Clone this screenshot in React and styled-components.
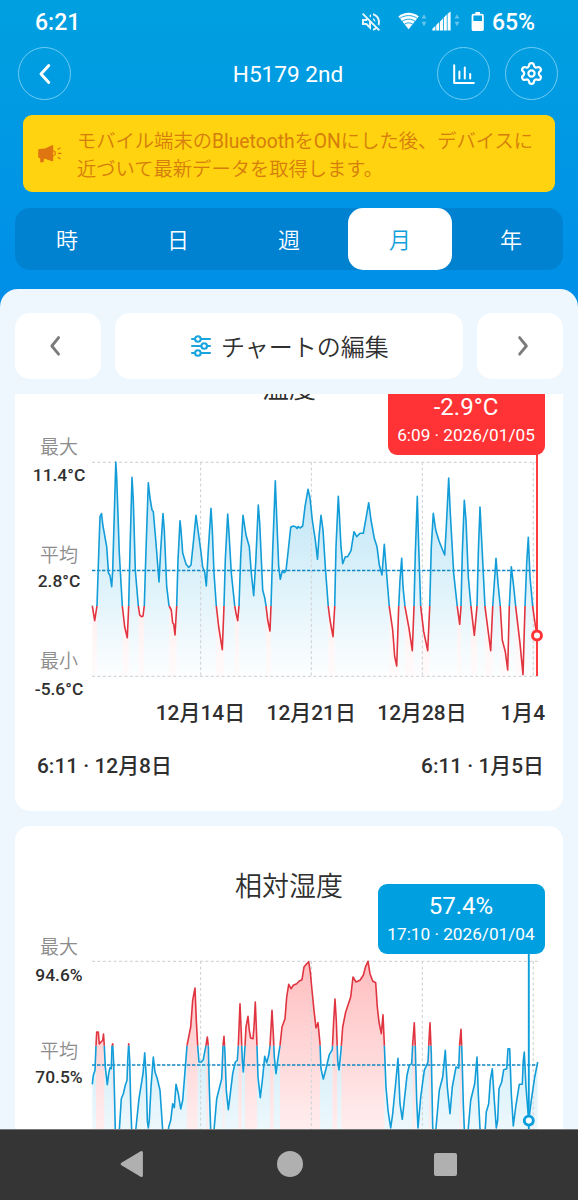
import React from 'react';
import styled, { createGlobalStyle } from 'styled-components';
import { MdOutlineVolumeOff } from 'react-icons/md';
import { Settings } from 'lucide-react';

const PLOT_WIDTH = 446;
const PLOT_HEIGHT = 214;

// x / y pairs in plot pixels, y counted down from the maximum
const temperature = [
  0.3,143.7, 2.7,158.7, 5,143.7, 6.5,98, 8,54.7, 9.5,51.5, 10.8,63, 14.7,84.7, 16.5,111, 18,113.5, 19.7,124.7,
  20.7,108, 23.8,0, 24.7,15, 27.3,91, 30.3,143.7, 32.7,165, 35.3,175.7, 36.7,143.7, 38,88, 40,15.3, 41.3,38,
  43.3,108, 46.3,143.7, 47.7,153, 49.5,154.7, 51,154, 52.3,143.7, 54,88, 56.3,20.7, 58,36, 60,48, 61.3,49.5,
  64,81, 67,120, 68.7,88, 71,51.5, 72.3,68, 74.7,124.7, 77,143.7, 79.3,148, 80.7,161, 81.7,162, 83,173,
  84.7,143.7, 86,98, 88,58.7, 89,68, 90.7,91, 94,102, 96.7,105.5, 99,103, 101.3,81, 104,53.3, 106,68,
  108.7,88, 110.7,105, 112.7,110, 114.3,124, 116.3,88, 119,46.3, 120.3,68, 122,111, 124.3,143.7, 126.7,165,
  130.3,187.7, 132,143.7, 133.3,98, 135.7,52, 137,71, 139.3,111, 142.7,143.7, 144,151, 145.7,158.7, 147,143.7,
  148.7,95, 151,53.3, 154,73, 157.3,84.7, 159.3,111, 161.7,133.7, 163.7,101, 166.3,43, 167.7,61, 170.7,128,
  172.7,135.7, 174,143.7, 175.7,158, 178,169, 179,143.7, 180.7,88, 183.3,18.7, 184.7,54.7, 186.7,104.7,
  188.3,117.3, 190.3,108.7, 192.3,110.7, 194,108.7, 196.3,88, 198.7,65.3, 201.3,64, 204,65, 205,66.5, 206.3,64.5,
  208,66, 210.7,64, 213,44.7, 216,27.3, 218,36, 220.3,58, 223.3,78, 225.5,97.3, 227,74.7, 229,53.3, 231,68,
  233.3,104.7, 236.3,144.7, 238,158, 241,174.7, 242.7,144.7, 244,84.7, 246.3,34.3, 247.3,51.3, 249,84.7,
  250.7,101.7, 253.3,94.7, 255.7,94.7, 259,88.7, 262,69.7, 264.7,74.7, 268,71.3, 271.3,71.3, 274,56.3,
  276.7,40.7, 279,58, 282.3,76.3, 285,84.7, 287.3,103, 290,113, 292.3,82.3, 294.3,108, 297.3,144.7, 300.7,168,
  302.7,194.7, 304.7,204, 306.7,144.7, 308,118, 309.7,96.3, 311,124.7, 313,144.7, 317,166.3, 320.3,188.7,
  322,144.7, 323.3,91.3, 325.3,34.3, 326.7,84.7, 328.7,144.7, 331.7,169.7, 335.7,188.7, 337.7,144.7,
  339.3,84.7, 341.3,51.3, 343.7,68, 347.3,79.7, 352.7,93, 354.3,64.7, 356.7,16, 358.3,51.3, 361.7,111.3,
  365.3,144.7, 367.7,162.3, 369,144.7, 370.3,91.3, 372.3,38.3, 374,58, 376.3,114.7, 379,144.7, 382.3,173.3,
  385,144.7, 386.3,91.3, 388,45, 390,84.7, 393,144.7, 396,168, 398.7,188.7, 400.7,144.7, 404,96.3, 406,121.3,
  408.3,144.7, 410.3,178, 413.3,189.7, 415.7,208, 417.3,144.7, 419.3,104.7, 421.7,124.7, 423.7,144.7,
  428,181.3, 431,212.7, 433,144.7, 434.7,101.3, 436.3,75.3, 438,114.7, 440.7,144.7, 443.3,163, 445,173,
];

const humidity = [
  0.3,123.3, 1.3,114.3, 3,109.3, 4,84.7, 4.7,71, 6.3,71, 7.3,83, 9,81, 10.7,79.3, 11.5,73, 12.3,84.7, 13.3,106,
  15.3,123.7, 16.7,112.7, 18,106.7, 19.3,107.7, 20,84.7, 20.7,82.7, 21.7,102.7, 22.7,142.7, 23.3,169.3,
  25.3,200, 27.3,169.3, 29.3,137.7, 31.3,132.7, 33.3,124.3, 35,119.3, 35.7,99.3, 36.7,82.7, 37.7,99.3,
  38.7,142.7, 39.7,169.3, 41.7,195, 43.7,169.3, 47,137.7, 51,112.7, 52.7,91.7, 54.3,116, 55.3,159.3, 56.3,167,
  57.3,159.3, 59,126, 61.3,96, 63,111, 65.3,117.7, 68,129.3, 70.7,169.3, 73.7,190, 76.7,166, 78.7,159.3,
  80.7,142.7, 82.3,146.7, 84,123.3, 86.3,132.7, 88.7,148, 90.7,139.3, 92.3,119.3, 95,84.7, 98.7,66,
  100.7,39.3, 103,27, 104.3,59.3, 105.7,84.7, 107,101, 109.3,101, 111.3,98.7, 113,89.3, 114,84.7, 115.3,76,
  116.3,84.7, 117.3,126, 118.7,169.3, 120.3,185, 122,169.3, 124.7,137.7, 129.7,117.7, 131,84.7, 132,75.3,
  133,92.7, 134.3,129.3, 136.3,148.7, 138.3,132.7, 140.7,112.7, 143.3,101, 145.3,99.3, 146.3,84.7, 148,42.7,
  149.3,72.7, 150.3,99.3, 151.3,111, 153,84.7, 154,66, 156,55.3, 157.3,69.3, 158.7,77, 161,77.7, 162,66,
  163.3,41, 164.7,76, 166,116, 168.3,136.7, 170.7,116, 172.7,95.3, 174.7,101.7, 176.7,94.3, 178,84.7,
  180,49.3, 181.3,72.7, 182.3,96, 184,112.7, 185.7,99.3, 188,84.7, 190,66, 193,57.7, 194.7,36, 196.7,23.3,
  199,27.7, 201.3,24.3, 204.7,22.7, 207.3,20, 210,18.7, 212,6, 214.7,2.7, 216.7,0.7, 218.3,11, 220,29.3,
  222,49.3, 224,67, 226,61.7, 228,82.7, 229,107.7, 231.3,118, 234,107.7, 237.3,93.7, 240.3,88.7, 241.7,59.3,
  243,38, 244.3,59.3, 245.7,99.3, 247,109, 249,89.3, 250.7,66, 253.7,51, 258.7,36, 261,16, 264,21, 268,19.3,
  271.3,14.3, 273.7,5.3, 276,0.3, 278,12.7, 280.7,20, 283.7,21.7, 285.3,46, 287,61, 289.3,72.7, 291,53.7,
  292.3,82.7, 294,126, 296,149.3, 298.7,167, 300.7,152.7, 303.3,126, 306,97.3, 308,142.7, 310.3,158.3,
  312.3,139.3, 315,114.3, 317.3,104.3, 319.7,102.7, 320.7,82.7, 322.3,61.7, 323.3,86, 324.7,139.3, 326,167,
  328.7,136, 332.3,109.3, 336,101, 337,79.3, 338,61.7, 339.3,92.7, 340.7,166, 342.3,179, 344,167, 347.3,129.3,
  350.7,116, 353.3,89.3, 355.3,126, 358,152.7, 360.3,126, 364,106, 366.7,107, 367.7,82.7, 369,68.3, 370,92.7,
  371.3,142.7, 372.3,167.7, 374.3,183, 376.3,167, 378.7,139.3, 382.7,122.7, 385,96, 386.3,132.7, 388,167.7,
  390.7,183, 393.3,167, 394.3,151, 396.7,142.7, 398.3,119.3, 400.3,107.7, 402.3,139.3, 404.3,167, 405.7,159,
  407,127.7, 409.7,121, 411.7,108.7, 414.7,107.7, 416,87.7, 417.7,87.7, 419.3,132.7, 421.3,165, 423.7,146,
  427.3,123.3, 430.3,123.3, 431.3,99.3, 432.3,91, 434,126, 436.7,160, 439.3,139.3, 442.7,116, 445.7,101,
];

const toPoints = (flat) => {
  const points = [];
  for (let i = 0; i < flat.length; i += 2) points.push([flat[i], flat[i + 1]]);
  return points;
};

// cuts the series where it crosses the limit, so every piece has one colour
const splitAt = (points, limit) => {
  const runs = [];
  let run = [points[0]];
  let below = points[0][1] > limit;
  for (let i = 1; i < points.length; i++) {
    const [x0, y0] = points[i - 1];
    const [x1, y1] = points[i];
    const nowBelow = y1 > limit;
    if (nowBelow !== below) {
      const cross = [x0 + ((x1 - x0) * (limit - y0)) / (y1 - y0), limit];
      run.push(cross);
      runs.push({ below, run });
      run = [cross];
      below = nowBelow;
    }
    run.push(points[i]);
  }
  runs.push({ below, run });
  return runs;
};

const BLUE = '#129dd8';
const RED = '#e03540';

function Chart({ id, data, limit, average, alarmBelow, cursor, cursorColor, marker, redFill }) {
  const runs = splitAt(toPoints(data), limit);
  return (
    <Plot viewBox={`0 0 ${PLOT_WIDTH + 10} ${PLOT_HEIGHT + 10}`}>
      <defs>
        <linearGradient id={`${id}-blue`} gradientUnits="userSpaceOnUse" x1="0" y1="0" x2="0" y2={PLOT_HEIGHT}>
          <stop offset="0" stopColor="#0a9fdc" stopOpacity="0.3" />
          <stop offset="1" stopColor="#0a9fdc" stopOpacity="0.01" />
        </linearGradient>
        <linearGradient id={`${id}-red`} gradientUnits="userSpaceOnUse" x1="0" y1="0" x2="0" y2={PLOT_HEIGHT}>
          <stop offset="0" stopColor="#ff3338" stopOpacity={redFill} />
          <stop offset="1" stopColor="#ff3338" stopOpacity="0.02" />
        </linearGradient>
      </defs>
      {runs.map(({ below, run }, i) => (
        <path
          key={i}
          d={`M${run[0][0]} ${PLOT_HEIGHT}L${run.join('L')}L${run[run.length - 1][0]} ${PLOT_HEIGHT}Z`}
          fill={`url(#${id}-${below === alarmBelow ? 'red' : 'blue'})`}
        />
      ))}
      <g stroke="#d4d7da" strokeWidth="1.2" strokeDasharray="3 2.4">
        <path d={`M0 .3H${PLOT_WIDTH}M0 ${PLOT_HEIGHT + 0.4}H${PLOT_WIDTH}`} />
        <path d={`M108.6 0V${PLOT_HEIGHT}M219.4 0V${PLOT_HEIGHT}M330.4 0V${PLOT_HEIGHT}M441.3 0V${PLOT_HEIGHT}`} />
      </g>
      <path d={`M0 ${average}H${PLOT_WIDTH}`} stroke="#1287c4" strokeWidth="1.5" strokeDasharray="3.4 1.6" />
      {runs.map(({ below, run }, i) => (
        <path
          key={i}
          d={`M${run.join('L')}`}
          fill="none"
          stroke={below === alarmBelow ? RED : BLUE}
          strokeWidth="1.6"
          strokeLinejoin="round"
        />
      ))}
      <path d={`M${cursor} -9V${PLOT_HEIGHT}`} stroke={cursorColor} strokeWidth="1.9" />
      <circle cx={cursor} cy={marker} r="4.5" fill="#fff" stroke={cursorColor} strokeWidth="2.9" />
    </Plot>
  );
}

function Scale({ rows, offset = 5 }) {
  return (
    <ScaleColumn $offset={offset}>
      {rows.map(([label, value, height]) => (
        <ScaleItem key={label} $height={height}>
          <ScaleLabel>{label}</ScaleLabel>
          <ScaleValue $tight={label === '平均'}>{value}</ScaleValue>
        </ScaleItem>
      ))}
    </ScaleColumn>
  );
}

const tabs = ['時', '日', '週', '月', '年'];

export default function App() {
  return (
    <Screen>
      <GlobalStyle />
      <StatusBar>
        <Clock>6:21</Clock>
        <StatusIcons>
          <MdOutlineVolumeOff size={24} />
          <WifiIcon />
          <SignalIcon />
          <BatteryIcon />
          <Battery>65%</Battery>
        </StatusIcons>
      </StatusBar>

      <TitleBar>
        <RoundButton>
          <svg width="14" height="24" viewBox="0 0 14 24" fill="none" stroke="#fff" strokeWidth="2.9" strokeLinecap="round" strokeLinejoin="round">
            <path d="M10.8 3.6L3 12l7.8 8.4" />
          </svg>
        </RoundButton>
        <Title>H5179 2nd</Title>
        <TitleActions>
          <RoundButton>
            <svg width="24" height="24" viewBox="0 0 24 24" fill="none" stroke="#fff" strokeWidth="2" strokeLinecap="round">
              <path d="M2.2 3.2V21H21.8" strokeLinejoin="round" />
              <path d="M7.4 9.6V16.4M12.8 5.6V16.4M18.2 12V16.4" />
            </svg>
          </RoundButton>
          <RoundButton>
            <Settings size={25} strokeWidth={2.1} />
          </RoundButton>
        </TitleActions>
      </TitleBar>

      <Notice>
        <MegaphoneIcon />
        <NoticeText>
          モバイル端末のBluetoothをONにした後、デバイスに
          <br />
          近づいて最新データを取得します。
        </NoticeText>
      </Notice>

      <Tabs>
        {tabs.map((tab) => (
          <Tab key={tab} $active={tab === '月'}>{tab}</Tab>
        ))}
      </Tabs>

      <Sheet>
        <Toolbar>
          <ToolButton>
            <Chevron d="M9.6 2.6L2.8 11l6.8 8.2" />
          </ToolButton>
          <EditButton>
            <SlidersIcon />
            チャートの編集
          </EditButton>
          <ToolButton>
            <Chevron d="M2.6 2.6L9.4 11l-6.8 8.2" />
          </ToolButton>
        </Toolbar>

        <Scroller>
          <Card $height={483} $shift={-66}>
            <CardTitle>温度</CardTitle>
            <Tip $color="#ff3336" $top={57} $width={157}>
              <TipValue>-2.9°C</TipValue>
              <TipTime>6:09 · 2026/01/05</TipTime>
            </Tip>
            <PlotRow>
              <Scale rows={[['最大', '11.4°C', 108], ['平均', '2.8°C', 106.5], ['最小', '-5.6°C', 60]]} />
              <Chart
                id="temp"
                data={temperature}
                limit={144}
                average={108.6}
                alarmBelow
                cursor={445}
                cursorColor="#ff3336"
                marker={173.5}
                redFill={0.2}
              />
            </PlotRow>
            <Dates>
              <DateTick>12月14日</DateTick>
              <DateTick>12月21日</DateTick>
              <DateTick>12月28日</DateTick>
              <LastTick>1月4</LastTick>
            </Dates>
            <Range>
              <span>6:11 · 12月8日</span>
              <span>6:11 · 1月5日</span>
            </Range>
          </Card>

          <Card $height={451}>
            <CardTitle>相対湿度</CardTitle>
            <Tip $color="#00a0e0" $top={58} $width={167}>
              <TipValue>57.4%</TipValue>
              <TipTime>17:10 · 2026/01/04</TipTime>
            </Tip>
            <PlotRow $gap={20.6}>
              <Scale offset={6} rows={[['最大', '94.6%', 104], ['平均', '70.5%', 100]]} />
              <Chart
                id="hum"
                data={humidity}
                limit={84.7}
                average={104}
                alarmBelow={false}
                cursor={436.8}
                cursorColor="#0a9fdc"
                marker={159.6}
                redFill={0.32}
              />
            </PlotRow>
          </Card>
        </Scroller>
      </Sheet>

      <NavBar>
        <svg width="26" height="30" viewBox="0 0 26 30" fill="#b0b0b0" stroke="#b0b0b0" strokeWidth="3" strokeLinejoin="round">
          <path d="M3.2 15L22.4 3.6V26.4Z" />
        </svg>
        <HomeDot />
        <RecentsSquare />
      </NavBar>
    </Screen>
  );
}

function Chevron({ d }) {
  return (
    <svg width="12" height="22" viewBox="0 0 12 22" fill="none" stroke="#7b7b7b" strokeWidth="2.8" strokeLinecap="round" strokeLinejoin="round">
      <path d={d} />
    </svg>
  );
}

function Arrows({ x }) {
  return <path d={`M${x} 7.6l2.4-4.4 2.4 4.4zM${x} 10.8l2.4 4.4 2.4-4.4z`} fill="#fff" opacity="0.4" />;
}

function WifiIcon() {
  return (
    <svg width="30" height="22" viewBox="0 0 30 22" fill="none">
      <path d="M.4 5.4C6 .6 15.2 .6 20.8 5.4L10.6 18.2z" fill="#fff" />
      <path d="M1.6 7.6C6.8 3.6 14.4 3.6 19.6 7.6M4 10.4c4-3 9.2-3 13.2 0M6.4 13.2c2.6-1.8 5.8-1.8 8.4 0" stroke="#009fe1" strokeWidth=".9" />
      <Arrows x={23.6} />
    </svg>
  );
}

function SignalIcon() {
  return (
    <svg width="30" height="22" viewBox="0 0 30 22" fill="#fff">
      <path d="M.4 19.4v-1.6l3-3v4.6zM4.2 19.4v-5.4l3-3v8.4zM8 19.4V10.6l3-3v11.8zM11.8 19.4V6.6l3-3v15.8zM15.6 19.4V2.8l3-2.4v19z" />
      <Arrows x={22.6} />
    </svg>
  );
}

function BatteryIcon() {
  return (
    <svg width="14" height="22" viewBox="0 0 14 22" fill="none">
      <path d="M4.4 1h4.6v2.4H4.4z" fill="#fff" />
      <rect x="1.5" y="3.6" width="10.4" height="15.6" rx="1" stroke="#fff" strokeWidth="1.8" />
      <path d="M2 10h10v9H2z" fill="#fff" />
    </svg>
  );
}

function MegaphoneIcon() {
  return (
    <svg width="26" height="20" viewBox="0 0 26 20" fill="#df7511">
      <path d="M1.2 6.2Q1.2 5 2.4 5L8 4.4L15 1.2Q16.2 .8 16.2 2V16.4Q16.2 17.6 15 17.2L7 14.4L6.6 18.2H3.2V14H2.2Q1.2 14 1.2 12.8Z" />
      <path d="M16.4 6.6a2.7 2.7 0 010 5.2" fill="none" stroke="#df7511" strokeWidth="1.2" />
      <path d="M21 5.2l2-1.2M21.4 9.4h2.6M21 13.4l2 1.2" stroke="#df7511" strokeWidth="1.2" strokeLinecap="round" />
    </svg>
  );
}

function SlidersIcon() {
  return (
    <svg width="22" height="24" viewBox="0 0 22 24" fill="#fff" stroke="#18a4dd" strokeWidth="2.1" strokeLinecap="round">
      <path d="M2 5H20M2 12H20M2 19H20" />
      <circle cx="7.9" cy="5" r="2.8" />
      <circle cx="14.2" cy="12" r="2.8" />
      <circle cx="7.9" cy="19" r="2.8" />
    </svg>
  );
}

const GlobalStyle = createGlobalStyle`
  body {
    margin: 0;
    font-family: Roboto, 'Noto Sans CJK JP DemiLight', 'Noto Sans CJK JP', sans-serif;
    color: #2f2f2f;
  }

  * {
    box-sizing: border-box;
  }
`;

const Screen = styled.div`
  display: flex;
  flex-direction: column;
  width: 578px;
  height: 1200px;
  overflow: hidden;
  background: linear-gradient(#00a0e0 0, #009ce2 80px, #008ee8 300px);
`;

const StatusBar = styled.header`
  display: flex;
  justify-content: space-between;
  align-items: center;
  height: 44px;
  padding: 0 43px 0 35px;
  color: #fff;
`;

const Clock = styled.span`
  font-size: 23px;
  font-weight: 500;
`;

const StatusIcons = styled.div`
  display: flex;
  align-items: center;

  svg {
    flex: none;
  }

  svg:first-child {
    margin-right: 15px;
    opacity: 0.9;
  }

  svg:nth-child(2) {
    margin-right: 4px;
  }

  svg:nth-child(3) {
    margin-right: 9px;
  }
`;

const Battery = styled.span`
  margin-left: 6.5px;
  font-size: 23px;
  font-weight: 500;
`;

const TitleBar = styled.div`
  display: grid;
  grid-template-columns: 1fr auto 1fr;
  align-items: center;
  height: 59px;
  padding: 0 20px 0 18px;
  color: #fff;
`;

const Title = styled.h1`
  margin: 2px 0 0;
  font-size: 22.6px;
  font-weight: 400;
`;

const TitleActions = styled.div`
  display: flex;
  justify-content: flex-end;
  gap: 15px;
`;

const RoundButton = styled.button`
  display: flex;
  justify-content: center;
  align-items: center;
  width: 53px;
  height: 53px;
  padding: 0;
  border: 1px solid #6fcdf2;
  border-radius: 50%;
  background: none;
  color: #fff;
`;

const Notice = styled.div`
  display: flex;
  align-items: center;
  height: 77px;
  margin: 12.4px 23px 0;
  padding: 0 14px;
  border-radius: 9px;
  background: #ffd30f;
`;

const NoticeText = styled.p`
  margin: 5px 0 0 14px;
  color: #d67d0c;
  font-size: 19.3px;
  line-height: 28px;
  white-space: nowrap;
`;

const Tabs = styled.nav`
  display: flex;
  justify-content: center;
  height: 62px;
  margin: 16px 15px 0;
  border-radius: 15px;
  background: #0082d1;
`;

const Tab = styled.button`
  flex: none;
  width: 103.5px;
  margin: 0 3.75px;
  padding: 0 0 2px;
  border: 0;
  border-radius: 15px;
  background: ${(p) => (p.$active ? '#fff' : 'none')};
  color: ${(p) => (p.$active ? '#12a0dc' : '#fff')};
  font-family: inherit;
  font-size: 22px;
`;

const Sheet = styled.main`
  flex: 1;
  display: flex;
  flex-direction: column;
  min-height: 0;
  margin-top: 18.6px;
  border-radius: 18px 18px 0 0;
  background: #eff7fe;
  overflow: hidden;
`;

const Toolbar = styled.div`
  display: flex;
  gap: 14px;
  height: 105px;
  padding: 24px 15px 15px;
`;

const ToolButton = styled.button`
  display: flex;
  justify-content: center;
  align-items: center;
  width: 86px;
  padding: 0 7px 0 0;
  border: 0;
  border-radius: 15px;
  background: #fff;

  &:last-child {
    padding: 0 0 0 6px;
  }
`;

const EditButton = styled(ToolButton)`
  flex: 1;
  gap: 9px;
  padding: 0 0 0 1px;
  color: #2f2f2f;
  font-family: inherit;
  font-size: 24px;
`;

const Scroller = styled.div`
  flex: 1;
  display: flex;
  flex-direction: column;
  gap: 15px;
  min-height: 0;
  overflow: hidden;
`;

const Card = styled.section`
  position: relative;
  flex: none;
  height: ${(p) => p.$height}px;
  margin: ${(p) => p.$shift || 0}px 15px 0;
  border-radius: 15px;
  background: #fff;
`;

const CardTitle = styled.h2`
  margin: 0;
  padding-top: 41px;
  font-size: 27px;
  font-weight: 400;
  line-height: 40px;
  text-align: center;
`;

const Tip = styled.div`
  position: absolute;
  top: ${(p) => p.$top}px;
  right: 18.5px;
  display: flex;
  flex-direction: column;
  align-items: center;
  width: ${(p) => p.$width}px;
  height: 70px;
  padding-top: 6px;
  border-radius: 9px;
  background: ${(p) => p.$color};
  color: #fff;
  z-index: 1;
`;

const TipValue = styled.div`
  font-size: 24px;
  line-height: 32px;
`;

const TipTime = styled.div`
  font-size: 17.2px;
  line-height: 24px;
`;

const PlotRow = styled.div`
  display: flex;
  margin-top: ${(p) => p.$gap || 20}px;
`;

const ScaleColumn = styled.div`
  width: 77px;
  padding: ${(p) => p.$offset}px 0 0 11px;
`;

const ScaleItem = styled.div`
  width: 66px;
  height: ${(p) => p.$height}px;
  text-align: center;
`;

const ScaleLabel = styled.div`
  color: #8c8c8c;
  font-size: 19px;
  line-height: 28px;
`;

const ScaleValue = styled.div`
  margin-top: ${(p) => (p.$tight ? -2 : 0)}px;
  font-size: 17.4px;
  font-weight: 500;
  line-height: 26px;
`;

const Plot = styled.svg`
  width: ${PLOT_WIDTH + 10}px;
  height: ${PLOT_HEIGHT + 10}px;
  margin-top: 33px;
  overflow: visible;
`;

const Dates = styled.div`
  display: flex;
  width: 470px;
  margin: -15px 0 0 130px;
  height: 40px;
  font-family: Roboto, 'Noto Sans CJK JP', sans-serif;
  font-size: 20.9px;
  font-weight: 500;
  line-height: 40px;
`;

const DateTick = styled.span`
  width: 110.8px;
  text-align: center;
  white-space: nowrap;
`;

const LastTick = styled.span`
  padding-left: 23px;
`;

const Range = styled.div`
  display: flex;
  justify-content: space-between;
  padding: 13px 19px 0 22px;
  font-family: Roboto, 'Noto Sans CJK JP', sans-serif;
  font-size: 20.9px;
  font-weight: 500;
  line-height: 40px;
`;

const NavBar = styled.footer`
  display: flex;
  align-items: center;
  justify-content: space-between;
  height: 71px;
  padding: 0 121px 2px 119px;
  border-top: 1px solid #777;
  background: #353535;
`;

const HomeDot = styled.span`
  width: 26px;
  height: 26px;
  border-radius: 50%;
  background: #b0b0b0;
`;

const RecentsSquare = styled.span`
  width: 23px;
  height: 23px;
  border-radius: 2px;
  background: #b0b0b0;
`;
